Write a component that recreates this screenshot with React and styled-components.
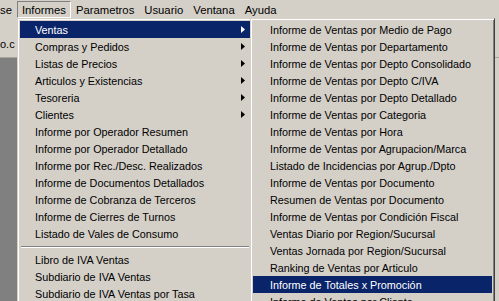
import React from 'react';
import styled, { createGlobalStyle } from 'styled-components';

const GlobalStyle = createGlobalStyle`
  html, body {
    margin: 0;
    padding: 0;
    background: #d4d0c8;
  }
  body {
    font-family: "Liberation Sans", Arial, sans-serif;
    font-size: 11px;
  }
`;

const Screen = styled.div`
  position: relative;
  width: 499px;
  height: 301px;
  overflow: hidden;
  background: #d4d0c8;
  display: flex;
  flex-direction: column;
  color: #000;
`;

const MenuBar = styled.div`
  display: flex;
  align-items: stretch;
  height: 18px;
  background: #d4d0c8;
`;

const BarItem = styled.div`
  display: flex;
  align-items: center;
  padding: 0 4px;
  margin-left: ${(p) => p.$offset || 0}px;
  margin-top: 1px;
  border: 1px solid transparent;
  ${(p) =>
    p.$open &&
    `
    border-top-color: #808080;
    border-left-color: #808080;
    border-right-color: #ffffff;
    border-bottom-color: #ffffff;
  `}
  font-size: 11.3px;
  white-space: nowrap;
`;

const Workspace = styled.div`
  flex: 1;
  display: flex;
  flex-direction: column;
`;

const Toolbar = styled.div`
  height: 40px;
  display: flex;
  align-items: flex-end;
  padding-bottom: 6px;
  box-sizing: border-box;
  border-bottom: 1px solid #a8a49c;
  background: #d4d0c8;
  font-size: 11px;
`;

const ToolText = styled.span`
  margin-left: 0;
  padding-bottom: 1px;
`;

const Divider = styled.div`
  width: 1px;
  height: 12px;
  background: #000;
  margin: 0 0 8px 3px;
`;

const MdiArea = styled.div`
  flex: 1;
  display: flex;
  background: #808080;
`;

const ChildWindow = styled.div`
  margin-left: auto;
  width: 280px;
  background: #d4d0c8;
`;

const Menu = styled.div`
  position: absolute;
  top: ${(p) => p.$top}px;
  left: ${(p) => p.$left}px;
  width: ${(p) => p.$width}px;
  box-sizing: border-box;
  background: #d4d0c8;
  border-top: 1px solid #d4d0c8;
  border-left: 1px solid #d4d0c8;
  border-right: 1px solid #404040;
  border-bottom: 1px solid #404040;
  box-shadow: inset 1px 1px 0 #ffffff, inset -1px -1px 0 #808080;
  padding: 2px;
  z-index: ${(p) => p.$z || 1};
`;

const Item = styled.div`
  display: flex;
  align-items: center;
  height: 17px;
  padding-left: ${(p) => p.$indent}px;
  padding-right: 5px;
  background: ${(p) => (p.$active ? '#0a246a' : 'transparent')};
  color: ${(p) => (p.$active ? '#ffffff' : '#000000')};
  font-size: 10.8px;
  white-space: nowrap;
`;

const Label = styled.span`
  flex: 1;
`;

const Separator = styled.div`
  height: 9px;
  display: flex;
  align-items: center;
  padding: 0 1px;
  &::after {
    content: '';
    flex: 1;
    height: 0;
    border-top: 1px solid #808080;
    border-bottom: 1px solid #ffffff;
  }
`;

const Arrow = ({ color }) => (
  <svg width="4" height="7" viewBox="0 0 4 7" style={{ display: 'block' }}>
    <polygon points="0,0 4,3.5 0,7" fill={color} />
  </svg>
);

const informes = [
  { label: 'Ventas', sub: true, active: true },
  { label: 'Compras y Pedidos', sub: true },
  { label: 'Listas de Precios', sub: true },
  { label: 'Articulos y Existencias', sub: true },
  { label: 'Tesoreria', sub: true },
  { label: 'Clientes', sub: true },
  { label: 'Informe por Operador Resumen' },
  { label: 'Informe por Operador Detallado' },
  { label: 'Informe por Rec./Desc. Realizados' },
  { label: 'Informe de Documentos Detallados' },
  { label: 'Informe de Cobranza de Terceros' },
  { label: 'Informe de Cierres de Turnos' },
  { label: 'Listado de Vales de Consumo' },
  { separator: true },
  { label: 'Libro de IVA Ventas' },
  { label: 'Subdiario de IVA Ventas' },
  { label: 'Subdiario de IVA Ventas por Tasa' },
];

const ventas = [
  'Informe de Ventas por Medio de Pago',
  'Informe de Ventas por Departamento',
  'Informe de Ventas por Depto Consolidado',
  'Informe de Ventas por Depto C/IVA',
  'Informe de Ventas por Depto Detallado',
  'Informe de Ventas por Categoria',
  'Informe de Ventas por Hora',
  'Informe de Ventas por Agrupacion/Marca',
  'Listado de Incidencias por Agrup./Dpto',
  'Informe de Ventas por Documento',
  'Resumen de Ventas por Documento',
  'Informe de Ventas por Condición Fiscal',
  'Ventas Diario por Region/Sucursal',
  'Ventas Jornada por Region/Sucursal',
  'Ranking de Ventas por Articulo',
  'Informe de Totales x Promoción',
  'Informe de Ventas por Cliente',
];

export default function App() {
  return (
    <>
      <GlobalStyle />
      <Screen>
        <MenuBar>
          <BarItem $offset={-5}>se</BarItem>
          <BarItem $open>Informes</BarItem>
          <BarItem>Parametros</BarItem>
          <BarItem>Usuario</BarItem>
          <BarItem>Ventana</BarItem>
          <BarItem>Ayuda</BarItem>
        </MenuBar>
        <Workspace>
          <Toolbar>
            <ToolText>o.c</ToolText>
            <Divider />
          </Toolbar>
          <MdiArea>
            <ChildWindow />
          </MdiArea>
        </Workspace>

        <Menu $top={18} $left={17} $width={236}>
          {informes.map((it, i) =>
            it.separator ? (
              <Separator key={i} />
            ) : (
              <Item key={i} $indent={15} $active={it.active}>
                <Label>{it.label}</Label>
                {it.sub && <Arrow color={it.active ? '#ffffff' : '#000000'} />}
              </Item>
            )
          )}
        </Menu>

        <Menu $top={18} $left={250} $width={245} $z={2}>
          {ventas.map((label, i) => (
            <Item key={i} $indent={17} $active={label === 'Informe de Totales x Promoción'}>
              <Label>{label}</Label>
            </Item>
          ))}
        </Menu>
      </Screen>
    </>
  );
}
